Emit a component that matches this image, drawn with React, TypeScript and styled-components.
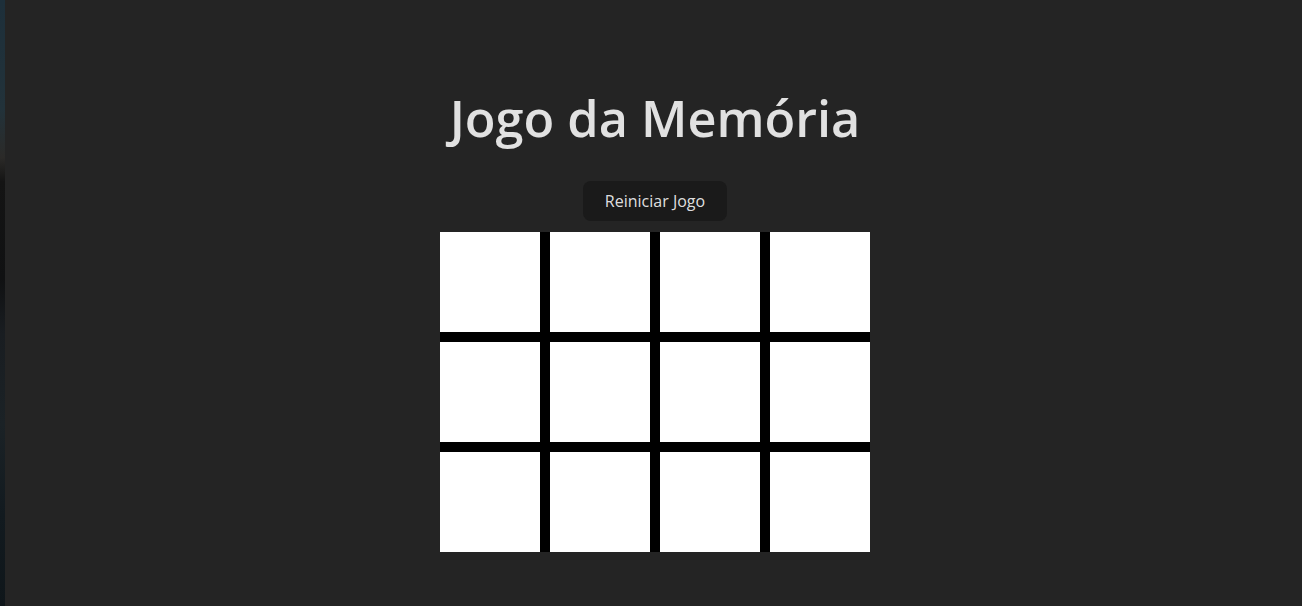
import React from 'react';
import styled, { createGlobalStyle } from 'styled-components';

const GlobalStyle = createGlobalStyle`
    html, body {
        margin: 0;
        padding: 0;
        background: #242424;
    }
    body {
        font-family: "Open Sans", "Noto Sans", sans-serif;
        color: rgba(255, 255, 255, 0.87);
    }
`;

const cards = Array.from({ length: 12 }, (_, i) => i);

const App: React.FC = () => {
    return (
        <>
            <GlobalStyle />
            <Screen>
                <Wallpaper />
                <Page>
                    <Title>Jogo da Memória</Title>
                    <RestartButton>Reiniciar Jogo</RestartButton>
                    <Board>
                        {cards.map((id) => (
                            <Card key={id} />
                        ))}
                    </Board>
                </Page>
            </Screen>
        </>
    );
};

export default App;

const Screen = styled.div`
    display: flex;
    width: 1302px;
    height: 606px;
    overflow: hidden;
`;

// bit of the desktop showing at the left edge
const Wallpaper = styled.div`
    width: 5px;
    flex-shrink: 0;
    background: linear-gradient(
        to bottom,
        #1d2f3a 0%,
        #22323a 18%,
        #2b2a28 26%,
        #141414 30%,
        #101112 46%,
        #191d21 55%,
        #1b2226 70%,
        #121a1f 85%,
        #0f161a 100%
    );
`;

const Page = styled.main`
    flex: 1;
    display: flex;
    flex-direction: column;
    align-items: center;
    padding: 90px 0 0 3px;
    background: #242424;
`;

const Title = styled.h1`
    margin: 0 0 36px;
    font-size: 50.4px;
    line-height: 1.1;
    font-weight: 600;
    color: #e1e1e1;
`;

const RestartButton = styled.button`
    border-radius: 8px;
    border: 1px solid transparent;
    padding: 9.6px 21px;
    font-family: inherit;
    font-size: 16px;
    font-weight: 500;
    line-height: 18px;
    background: #1a1a1a;
    color: rgba(255, 255, 255, 0.87);
    cursor: pointer;
    margin-bottom: 11px;
`;

const Board = styled.div`
    display: grid;
    grid-template-columns: repeat(4, 100px);
    gap: 10px;
    background: #000;
`;

const Card = styled.div`
    width: 100px;
    height: 100px;
    background: #fff;
`;
